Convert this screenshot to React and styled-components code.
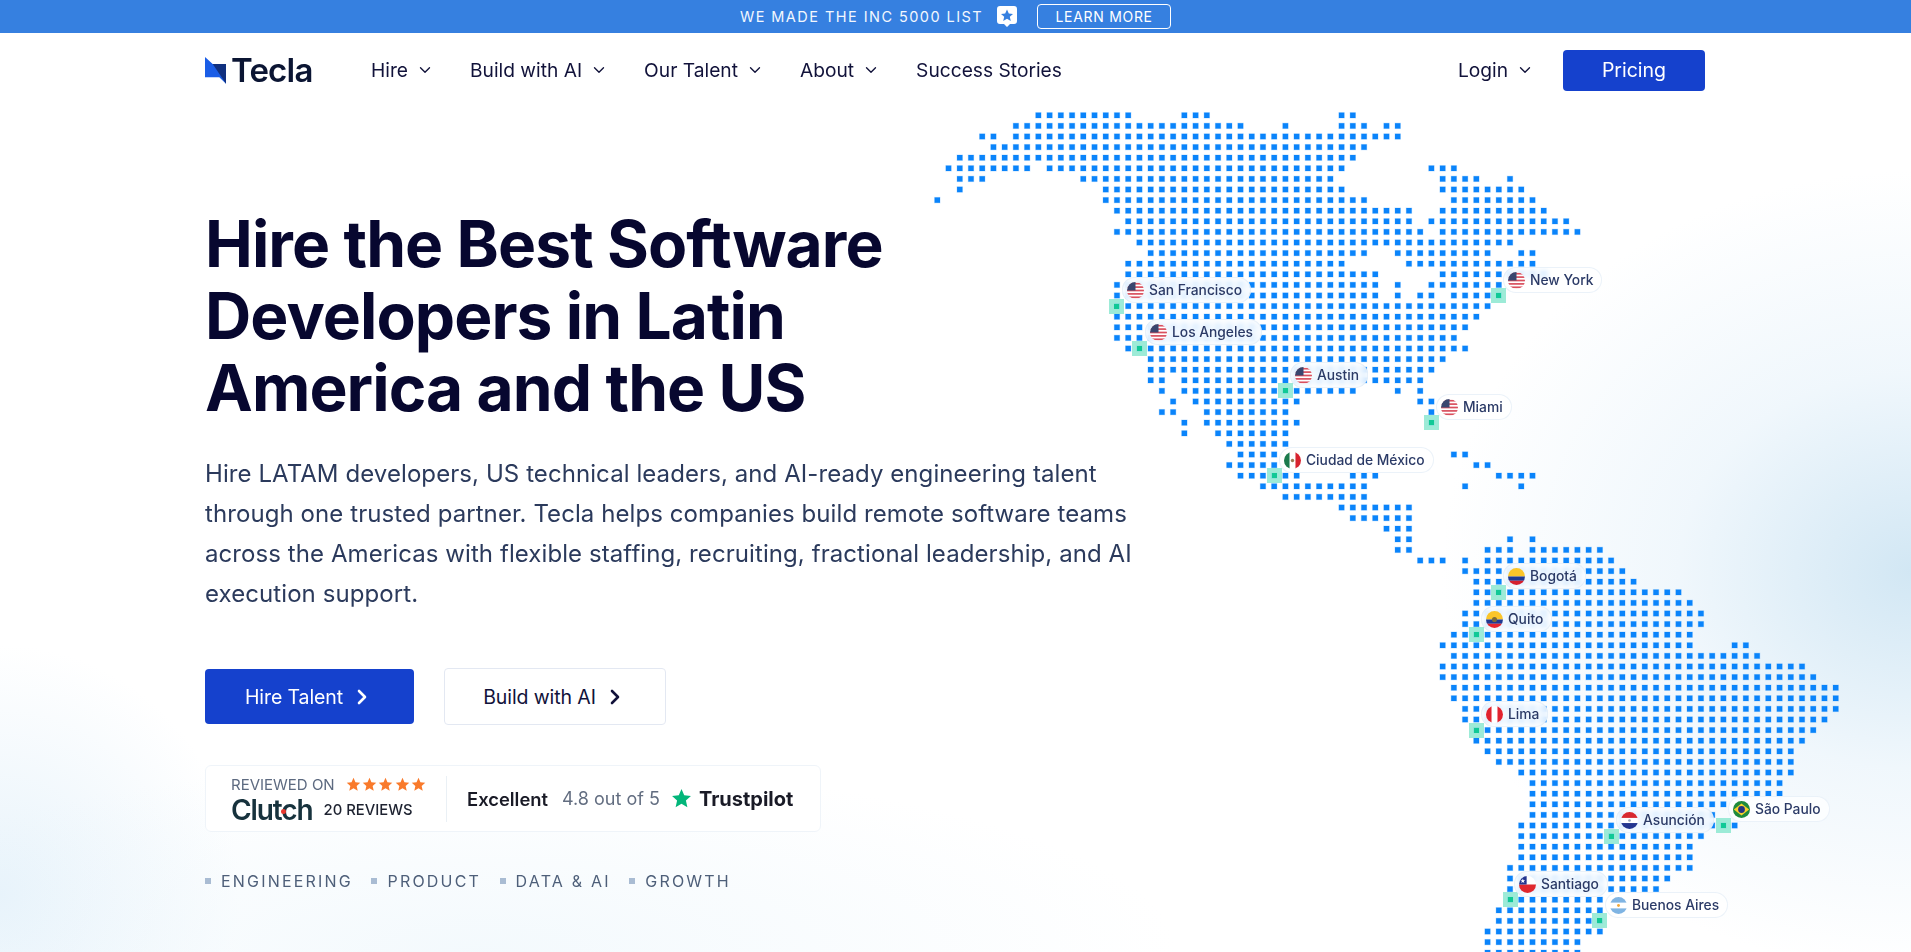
import React from "react";
import styled, { createGlobalStyle } from "styled-components";
import { ChevronDown, ChevronRight } from "lucide-react";

const GlobalStyle = createGlobalStyle`
  html, body { margin: 0; padding: 0; }
  body { font-family: Inter, "Noto Sans", sans-serif; color: #0b0b33; background: #fff; }
  * { box-sizing: border-box; }
`;

// land dots, one list of [from, to] columns per row
const ROWS = [
  [[9, 17], [22, 24], [36, 37]],
  [[7, 27], [31, 31], [36, 38], [40, 41]],
  [[4, 5], [7, 41]],
  [[5, 38]],
  [[2, 37]],
  [[1, 8], [10, 36], [44, 46]],
  [[2, 4], [13, 35], [45, 48], [51, 51]],
  [[2, 2], [15, 36], [45, 52]],
  [[0, 0], [15, 38], [46, 53]],
  [[16, 42], [45, 54]],
  [[17, 42], [44, 56]],
  [[16, 43], [45, 57]],
  [[18, 51]],
  [[19, 38], [41, 49], [52, 53]],
  [[17, 36], [42, 53]],
  [[17, 39], [45, 54]],
  [[16, 39], [41, 41], [44, 50]],
  [[16, 39], [41, 41], [43, 44], [46, 50]],
  [[16, 49]],
  [[16, 48]],
  [[16, 47]],
  [[16, 46]],
  [[17, 47]],
  [[19, 45]],
  [[19, 44]],
  [[19, 20], [22, 43]],
  [[20, 20], [22, 37], [41, 41], [43, 43]],
  [[21, 21], [23, 32], [43, 44]],
  [[20, 21], [24, 31], [44, 44]],
  [[22, 22], [24, 32], [44, 44]],
  [[22, 22], [25, 31]],
  [[26, 31]],
  [[27, 30], [46, 47]],
  [[26, 30], [48, 49]],
  [[27, 32], [37, 39], [50, 53]],
  [[29, 38], [47, 47], [52, 52]],
  [[31, 38]],
  [[36, 42]],
  [[37, 42]],
  [[40, 42]],
  [[41, 42], [51, 51], [53, 53]],
  [[41, 42], [49, 51], [53, 59]],
  [[43, 45], [47, 47], [49, 60]],
  [[47, 61]],
  [[48, 62]],
  [[48, 66]],
  [[48, 67]],
  [[47, 68]],
  [[47, 68]],
  [[46, 67]],
  [[45, 67], [71, 72]],
  [[46, 73]],
  [[45, 77]],
  [[45, 78]],
  [[46, 80]],
  [[46, 80]],
  [[47, 80]],
  [[47, 79]],
  [[48, 78]],
  [[48, 77]],
  [[49, 76]],
  [[50, 76]],
  [[52, 76]],
  [[53, 75]],
  [[53, 75]],
  [[53, 70]],
  [[53, 69]],
  [[52, 71]],
  [[52, 68]],
  [[52, 67]],
  [[52, 67]],
  [[51, 67]],
  [[51, 65]],
  [[51, 64]],
  [[51, 59]],
  [[50, 59]],
  [[50, 59]],
  [[49, 59]],
  [[49, 57]],
  [[49, 57]],
];

const PITCH_X = 11.23;
const PITCH_Y = 10.6;
const MAP_LEFT = 930;
const MAP_TOP = 108;
const dotX = (col) => 7.3 + col * PITCH_X;
const dotY = (row) => 7.3 + row * PITCH_Y;

const PINS = [
  { name: "San Francisco", flag: "us", col: 16, row: 18, x: 1122, y: 277 },
  { name: "Los Angeles", flag: "us", col: 18, row: 22, x: 1145, y: 319 },
  { name: "Austin", flag: "us", col: 31, row: 26, x: 1290, y: 362 },
  { name: "New York", flag: "us", col: 50, row: 17, x: 1503, y: 267 },
  { name: "Miami", flag: "us", col: 44, row: 29, x: 1436, y: 394 },
  { name: "Ciudad de México", flag: "mx", col: 30, row: 34, x: 1279, y: 447 },
  { name: "Bogotá", flag: "co", col: 50, row: 45, x: 1503, y: 563 },
  { name: "Quito", flag: "ec", col: 48, row: 49, x: 1481, y: 606 },
  { name: "Lima", flag: "pe", col: 48, row: 58, x: 1481, y: 701 },
  { name: "Asunción", flag: "py", col: 60, row: 68, x: 1616, y: 807 },
  { name: "São Paulo", flag: "br", col: 70, row: 67, x: 1728, y: 796 },
  { name: "Santiago", flag: "cl", col: 51, row: 74, x: 1514, y: 871 },
  { name: "Buenos Aires", flag: "ar", col: 59, row: 76, x: 1605, y: 892 },
];

const FLAGS = {
  us: (
    <>
      <rect width="20" height="20" fill="#fff" />
      {[0, 4, 8, 12, 16].map((y) => (
        <rect key={y} y={y + 1} width="20" height="2" fill="#d9505f" />
      ))}
      <rect width="10" height="10" fill="#39466f" />
    </>
  ),
  mx: (
    <>
      <rect width="20" height="20" fill="#fff" />
      <rect width="6.5" height="20" fill="#1a7a4c" />
      <rect x="13.5" width="6.5" height="20" fill="#d8232f" />
      <circle cx="10" cy="10" r="2" fill="#9c7b52" />
    </>
  ),
  co: (
    <>
      <rect width="20" height="10" fill="#fbc52a" />
      <rect y="10" width="20" height="5" fill="#1f3a93" />
      <rect y="15" width="20" height="5" fill="#d5202f" />
    </>
  ),
  ec: (
    <>
      <rect width="20" height="10" fill="#fbc52a" />
      <rect y="10" width="20" height="5" fill="#1f3a93" />
      <rect y="15" width="20" height="5" fill="#e5252f" />
      <circle cx="10" cy="10" r="3" fill="#7a6a3a" />
    </>
  ),
  pe: (
    <>
      <rect width="20" height="20" fill="#fff" />
      <rect width="6.5" height="20" fill="#e1232f" />
      <rect x="13.5" width="6.5" height="20" fill="#e1232f" />
    </>
  ),
  py: (
    <>
      <rect width="20" height="7" fill="#d8292f" />
      <rect y="7" width="20" height="6" fill="#fff" />
      <rect y="13" width="20" height="7" fill="#23358f" />
      <circle cx="10" cy="10" r="1.6" fill="#9aa5b8" />
    </>
  ),
  br: (
    <>
      <rect width="20" height="20" fill="#1f8a3c" />
      <polygon points="10,3 19,10 10,17 1,10" fill="#fbd12a" />
      <circle cx="10" cy="10" r="4" fill="#26357f" />
    </>
  ),
  cl: (
    <>
      <rect width="20" height="10" fill="#fff" />
      <rect y="10" width="20" height="10" fill="#e0282e" />
      <rect width="9" height="10" fill="#23358f" />
      <polygon points="4.5,3 5.3,5 7.3,5 5.7,6.2 6.3,8.2 4.5,7 2.7,8.2 3.3,6.2 1.7,5 3.7,5" fill="#fff" />
    </>
  ),
  ar: (
    <>
      <rect width="20" height="20" fill="#fff" />
      <rect width="20" height="6.6" fill="#7fb4e3" />
      <rect y="13.4" width="20" height="6.6" fill="#7fb4e3" />
      <circle cx="10" cy="10" r="1.7" fill="#f2a93b" />
    </>
  ),
};

const STAR = "10,1 12.6,7 19,7.6 14.2,11.9 15.6,18.3 10,15 4.4,18.3 5.8,11.9 1,7.6 7.4,7";

function Flag({ code }) {
  return (
    <FlagIcon viewBox="0 0 20 20" aria-hidden="true">
      {FLAGS[code]}
    </FlagIcon>
  );
}

function DotMap() {
  return (
    <MapLayer>
      <MapDots viewBox="0 0 981 844">
        {ROWS.map((spans, row) =>
          spans.flatMap(([from, to]) =>
            Array.from({ length: to - from + 1 }, (_, i) => (
              <rect
                key={`${row}-${from + i}`}
                x={dotX(from + i) - 2.7}
                y={dotY(row) - 2.7}
                width="5.4"
                height="5.4"
                fill="#0a84fb"
                stroke="#0a84fb"
                strokeOpacity="0.22"
                strokeWidth="1"
              />
            ))
          )
        )}
      </MapDots>
      {PINS.map((pin) => (
        <React.Fragment key={pin.name}>
          <PinMarker
            style={{ left: dotX(pin.col) - 7.5, top: dotY(pin.row) - 7.5 }}
          />
          <PinLabel style={{ left: pin.x - MAP_LEFT, top: pin.y - MAP_TOP }}>
            <Flag code={pin.flag} />
            {pin.name}
          </PinLabel>
        </React.Fragment>
      ))}
    </MapLayer>
  );
}

export default function App() {
  return (
    <Page>
      <GlobalStyle />
      <DotMap />
      <Banner>
        <BannerText>We made the Inc 5000 list</BannerText>
        <svg width="20" height="21" viewBox="0 0 20 21" aria-hidden="true">
          <path d="M3 0h14a3 3 0 0 1 3 3v12a3 3 0 0 1-3 3h-4l-3 3-3-3H3a3 3 0 0 1-3-3V3a3 3 0 0 1 3-3z" fill="#fff" />
          <polygon points="10,3.5 11.8,7.6 16,8 12.8,10.8 13.8,15 10,12.8 6.2,15 7.2,10.8 4,8 8.2,7.6" fill="#3680e0" />
        </svg>
        <LearnMore>Learn more</LearnMore>
      </Banner>
      <Container>
        <Nav>
          <Logo>
            <svg width="21" height="27" viewBox="0 0 21 27" aria-hidden="true">
              <polygon points="0,0 7.7,7 21,7 21,26.7 14.3,20.3 0,20.3" fill="#1a5de6" />
              <polygon points="7.7,7 21,7 21,26.7" fill="#10307f" />
            </svg>
            <LogoText>Tecla</LogoText>
          </Logo>
          <NavLinks>
            {["Hire", "Build with AI", "Our Talent", "About"].map((label) => (
              <NavLink key={label}>
                {label}
                <ChevronDown size={18} strokeWidth={1.8} />
              </NavLink>
            ))}
            <NavLink>Success Stories</NavLink>
          </NavLinks>
          <NavRight>
            <NavLink>
              Login
              <ChevronDown size={18} strokeWidth={1.8} />
            </NavLink>
            <PricingButton>Pricing</PricingButton>
          </NavRight>
        </Nav>
        <Hero>
          <Title>
            Hire the Best Software
            <br />
            Developers in Latin
            <br />
            America and the US
          </Title>
          <Lead>
            Hire LATAM developers, US technical leaders, and AI-ready engineering talent
            <br />
            through one trusted partner. Tecla helps companies build remote software teams
            <br />
            across the Americas with flexible staffing, recruiting, fractional leadership, and AI
            <br />
            execution support.
          </Lead>
          <Actions>
            <HeroButton $primary>
              Hire Talent
              <ChevronRight size={24} strokeWidth={2.6} />
            </HeroButton>
            <HeroButton>
              Build with AI
              <ChevronRight size={24} strokeWidth={2.6} />
            </HeroButton>
          </Actions>
          <RatingCard>
            <ClutchBlock>
              <ReviewedRow>
                Reviewed on
                <Stars>
                  {[0, 1, 2, 3, 4].map((i) => (
                    <svg key={i} width="15" height="15" viewBox="0 0 20 20" aria-hidden="true">
                      <polygon points={STAR} fill="#f97a2b" />
                    </svg>
                  ))}
                </Stars>
              </ReviewedRow>
              <ClutchRow>
                <ClutchLogo>
                  Clutch
                  <ClutchDot />
                </ClutchLogo>
                <ReviewCount>20 reviews</ReviewCount>
              </ClutchRow>
            </ClutchBlock>
            <Divider />
            <TrustBlock>
              <Excellent>Excellent</Excellent>
              <Score>4.8 out of 5</Score>
              <TrustLogo>
                <svg width="21" height="21" viewBox="0 0 20 20" aria-hidden="true">
                  <polygon points={STAR} fill="#03b67a" />
                </svg>
                Trustpilot
              </TrustLogo>
            </TrustBlock>
          </RatingCard>
          <Tags>
            {["Engineering", "Product", "Data & AI", "Growth"].map((tag) => (
              <Tag key={tag}>{tag}</Tag>
            ))}
          </Tags>
        </Hero>
      </Container>
    </Page>
  );
}

const Page = styled.div`
  position: relative;
  height: 100vh;
  overflow: hidden;
  background:
    radial-gradient(470px 400px at 100% 60%, #d2e7f4 0%, rgba(234, 244, 251, 0.7) 50%, rgba(255, 255, 255, 0) 100%),
    radial-gradient(700px 190px at 25% 100%, rgba(232, 244, 251, 0.5) 0%, rgba(255, 255, 255, 0) 100%),
    radial-gradient(240px 250px at 0% 94%, rgba(222, 238, 249, 0.7) 0%, rgba(255, 255, 255, 0) 100%),
    #fff;
`;

const Banner = styled.div`
  position: relative;
  height: 33px;
  background: #3680e0;
  display: flex;
  align-items: center;
  justify-content: center;
  gap: 14px;
  color: #fff;
`;

const BannerText = styled.span`
  font-size: 14.5px;
  letter-spacing: 1.45px;
  text-transform: uppercase;
  color: #f2f7fe;
`;

const LearnMore = styled.a`
  margin-left: 6px;
  width: 134px;
  height: 25px;
  border: 1px solid #fff;
  border-radius: 4px;
  font-size: 14px;
  letter-spacing: 0.7px;
  text-transform: uppercase;
  display: flex;
  align-items: center;
  justify-content: center;
`;

const Container = styled.div`
  position: relative;
  width: 1500px;
  margin-left: 205px;
`;

const Nav = styled.nav`
  height: 74px;
  display: flex;
  align-items: center;
`;

const Logo = styled.div`
  display: flex;
  align-items: center;
  gap: 5px;
  width: 166px;
`;

const LogoText = styled.span`
  font-size: 33px;
  font-weight: 600;
  letter-spacing: -0.8px;
  line-height: 1;
  color: #0b1533;
`;

const NavLinks = styled.div`
  display: flex;
  align-items: center;
  gap: 36px;
`;

const NavLink = styled.a`
  display: flex;
  align-items: center;
  gap: 8px;
  font-size: 19.2px;
  font-weight: 400;
  color: #11123a;
`;

const NavRight = styled.div`
  margin-left: auto;
  display: flex;
  align-items: center;
  gap: 29px;
`;

const PricingButton = styled.button`
  width: 142px;
  height: 41px;
  border: none;
  border-radius: 4px;
  background: #1541cd;
  color: #fff;
  font: 400 19.5px Inter, sans-serif;
`;

const Hero = styled.section`
  padding-top: 101px;
`;

const Title = styled.h1`
  margin: 0;
  font-size: 64px;
  line-height: 72px;
  font-weight: 700;
  letter-spacing: -0.9px;
  color: #07072f;
`;

const Lead = styled.p`
  margin: 30px 0 0;
  font-size: 24px;
  line-height: 40px;
  font-weight: 400;
  letter-spacing: 0.08px;
  white-space: nowrap;
  color: #2b3a5c;
`;

const Actions = styled.div`
  margin-top: 54px;
  display: flex;
  align-items: center;
  gap: 30px;
`;

const HeroButton = styled.button`
  height: ${(p) => (p.$primary ? "55px" : "57px")};
  width: ${(p) => (p.$primary ? "209px" : "222px")};
  display: flex;
  align-items: center;
  justify-content: center;
  gap: 7px;
  border-radius: 4px;
  border: ${(p) => (p.$primary ? "none" : "1px solid #e3e8f2")};
  background: ${(p) => (p.$primary ? "#1541cd" : "#fff")};
  color: ${(p) => (p.$primary ? "#fff" : "#11123a")};
  font: 400 19.5px Inter, sans-serif;
  letter-spacing: -0.1px;
`;

const RatingCard = styled.div`
  margin-top: 40px;
  width: 616px;
  height: 67px;
  display: flex;
  align-items: center;
  background: #fff;
  border: 1px solid #eff4f9;
  border-radius: 6px;
  padding-left: 25px;
`;

const ClutchBlock = styled.div`
  width: 215px;
  padding-top: 3px;
  display: flex;
  flex-direction: column;
  gap: 1px;
`;

const ReviewedRow = styled.div`
  display: flex;
  align-items: center;
  gap: 11px;
  font-size: 15px;
  line-height: 18px;
  text-transform: uppercase;
  color: #5d6a80;
`;

const Stars = styled.span`
  display: flex;
  gap: 1.4px;
`;

const ClutchRow = styled.div`
  display: flex;
  align-items: center;
  gap: 11px;
`;

const ClutchLogo = styled.span`
  position: relative;
  font-size: 28px;
  line-height: 30px;
  font-weight: 600;
  letter-spacing: -1.1px;
  color: #17323d;
`;

const ClutchDot = styled.i`
  position: absolute;
  left: 50px;
  top: 14px;
  width: 5px;
  height: 5px;
  border-radius: 50%;
  background: #e8392f;
`;

const ReviewCount = styled.span`
  font-size: 14.8px;
  font-weight: 500;
  text-transform: uppercase;
  color: #1d2230;
`;

const Divider = styled.div`
  width: 1px;
  height: 46px;
  background: #eaf0f5;
`;

const TrustBlock = styled.div`
  margin-left: 20px;
  display: flex;
  align-items: center;
  font-size: 18px;
`;

const Excellent = styled.span`
  width: 95px;
  font-size: 18.4px;
  font-weight: 600;
  color: #191a26;
`;

const Score = styled.span`
  width: 109px;
  color: #626d80;
`;

const TrustLogo = styled.span`
  display: flex;
  align-items: center;
  gap: 7px;
  font-size: 20px;
  font-weight: 700;
  color: #191a26;
`;

const Tags = styled.div`
  margin-top: 39px;
  display: flex;
  gap: 18.5px;
`;

const Tag = styled.span`
  display: flex;
  align-items: center;
  gap: 10px;
  font-size: 16px;
  line-height: 20px;
  letter-spacing: 2.2px;
  text-transform: uppercase;
  color: #4e5f79;

  &::before {
    content: "";
    width: 6px;
    height: 6px;
    background: #a9bcd3;
  }
`;

const MapLayer = styled.div`
  position: absolute;
  left: ${MAP_LEFT}px;
  top: ${MAP_TOP}px;
  width: 981px;
  height: 844px;
`;

const MapDots = styled.svg`
  display: block;
  width: 981px;
  height: 844px;
`;

const PinMarker = styled.span`
  position: absolute;
  width: 15px;
  height: 15px;
  background: rgba(140, 232, 208, 0.85);

  &::after {
    content: "";
    position: absolute;
    left: 5px;
    top: 5px;
    width: 5px;
    height: 5px;
    background: #10c996;
  }
`;

const PinLabel = styled.div`
  position: absolute;
  height: 26px;
  display: flex;
  align-items: center;
  gap: 5px;
  padding: 0 8px 0 4px;
  border-radius: 13px;
  border: 1px solid rgba(226, 236, 246, 0.7);
  background: rgba(255, 255, 255, 0.72);
  backdrop-filter: blur(3px);
  font-size: 13.8px;
  font-weight: 500;
  white-space: nowrap;
  color: #2b3a66;
`;

const FlagIcon = styled.svg`
  width: 17px;
  height: 17px;
  border-radius: 50%;
  flex: none;
`;
